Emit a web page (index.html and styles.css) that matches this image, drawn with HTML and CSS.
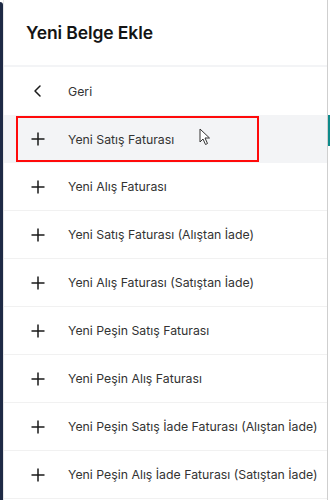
FILE: index.html
```html
<!DOCTYPE html>
<html lang="tr">
<head>
<meta charset="utf-8">
<link rel="stylesheet" href="styles.css">
</head>
<body>
<div class="app">
  <div class="leftbar"></div>
  <div class="panel">
    <div class="header"><h1 class="title">Yeni Belge Ekle</h1></div>
    <ul class="list">
      <li class="item back">
        <span class="icon"><svg width="14" height="14" viewBox="0 0 14 14"><path d="M9 2 L4 7 L9 12" fill="none" stroke="#1a1a1a" stroke-width="1.5" stroke-linecap="round" stroke-linejoin="round"/></svg></span>
        <span class="label">Geri</span>
      </li>
      <li class="item hover">
        <span class="icon"><svg width="14" height="14" viewBox="0 0 14 14"><path d="M7 0.5 V13.5 M0.5 7 H13.5" stroke="#1a1a1a" stroke-width="1.5"/></svg></span>
        <span class="label">Yeni Satış Faturası</span>
        <span class="highlight"></span>
        <svg class="cursor" width="12" height="18" viewBox="0 0 12 18"><path d="M1 1 L1 14 L4 11 L6.5 16.5 L8.5 15.5 L6 10 L10.5 10 Z" fill="#fff" stroke="#333" stroke-width="1" stroke-linejoin="round"/></svg>
      </li>
      <li class="item">
        <span class="icon"><svg width="14" height="14" viewBox="0 0 14 14"><path d="M7 0.5 V13.5 M0.5 7 H13.5" stroke="#1a1a1a" stroke-width="1.5"/></svg></span>
        <span class="label">Yeni Alış Faturası</span>
      </li>
      <li class="item">
        <span class="icon"><svg width="14" height="14" viewBox="0 0 14 14"><path d="M7 0.5 V13.5 M0.5 7 H13.5" stroke="#1a1a1a" stroke-width="1.5"/></svg></span>
        <span class="label">Yeni Satış Faturası (Alıştan İade)</span>
      </li>
      <li class="item">
        <span class="icon"><svg width="14" height="14" viewBox="0 0 14 14"><path d="M7 0.5 V13.5 M0.5 7 H13.5" stroke="#1a1a1a" stroke-width="1.5"/></svg></span>
        <span class="label">Yeni Alış Faturası (Satıştan İade)</span>
      </li>
      <li class="item">
        <span class="icon"><svg width="14" height="14" viewBox="0 0 14 14"><path d="M7 0.5 V13.5 M0.5 7 H13.5" stroke="#1a1a1a" stroke-width="1.5"/></svg></span>
        <span class="label">Yeni Peşin Satış Faturası</span>
      </li>
      <li class="item">
        <span class="icon"><svg width="14" height="14" viewBox="0 0 14 14"><path d="M7 0.5 V13.5 M0.5 7 H13.5" stroke="#1a1a1a" stroke-width="1.5"/></svg></span>
        <span class="label">Yeni Peşin Alış Faturası</span>
      </li>
      <li class="item">
        <span class="icon"><svg width="14" height="14" viewBox="0 0 14 14"><path d="M7 0.5 V13.5 M0.5 7 H13.5" stroke="#1a1a1a" stroke-width="1.5"/></svg></span>
        <span class="label">Yeni Peşin Satış İade Faturası (Alıştan İade)</span>
      </li>
      <li class="item">
        <span class="icon"><svg width="14" height="14" viewBox="0 0 14 14"><path d="M7 0.5 V13.5 M0.5 7 H13.5" stroke="#1a1a1a" stroke-width="1.5"/></svg></span>
        <span class="label">Yeni Peşin Alış İade Faturası (Satıştan İade)</span>
      </li>
    </ul>
  </div>
  <div class="edge"><span class="mark"></span></div>
</div>
</body>
</html>
```
FILE: styles.css
```css
* { box-sizing: border-box; }
html, body { margin: 0; padding: 0; }
body {
  background: #fff;
  font-family: Inter, "Noto Sans", sans-serif;
  color: #2b2b2b;
  width: 330px;
  height: 500px;
  overflow: hidden;
}
.app {
  display: flex;
  height: 500px;
}
.leftbar {
  width: 3px;
  background: #1e2a45;
  border-top-right-radius: 3px;
  margin-top: 2px;
}
.panel {
  flex: 1;
  border-left: 1px solid #e6e6e6;
  border-right: 1px solid #cfcfcf;
  background: #fff;
}
.header {
  height: 67px;
  display: flex;
  align-items: center;
  padding-left: 22px;
  border-bottom: 2px solid #f3f4f6;
}
.title {
  margin: 0;
  font-size: 17.5px;
  font-weight: 600;
  color: #141414;
  letter-spacing: -0.1px;
}
.list {
  list-style: none;
  margin: 0;
  padding: 0;
}
.item {
  position: relative;
  height: 48px;
  display: flex;
  align-items: center;
  padding-left: 27px;
  border-bottom: 1px solid #f1f1f1;
}
.item.back { border-bottom: none; height: 48px; }
.item.hover { background: #f3f4f6; height: 48px; border-bottom: none; }
.icon {
  width: 14px;
  height: 14px;
  display: flex;
  margin-right: 23px;
}
.label {
  font-size: 12.3px;
  color: #333;
  white-space: nowrap;
}
.highlight {
  position: absolute;
  left: 12px;
  top: 1px;
  width: 243px;
  height: 46px;
  border: 2.5px solid #ff0a0a;
}
.cursor {
  position: absolute;
  left: 195px;
  top: 13px;
}
.edge {
  width: 2px;
  position: relative;
  background: #fff;
}
.mark {
  position: absolute;
  left: 0;
  top: 115px;
  width: 2px;
  height: 31px;
  background: #0e8a8a;
}
```
